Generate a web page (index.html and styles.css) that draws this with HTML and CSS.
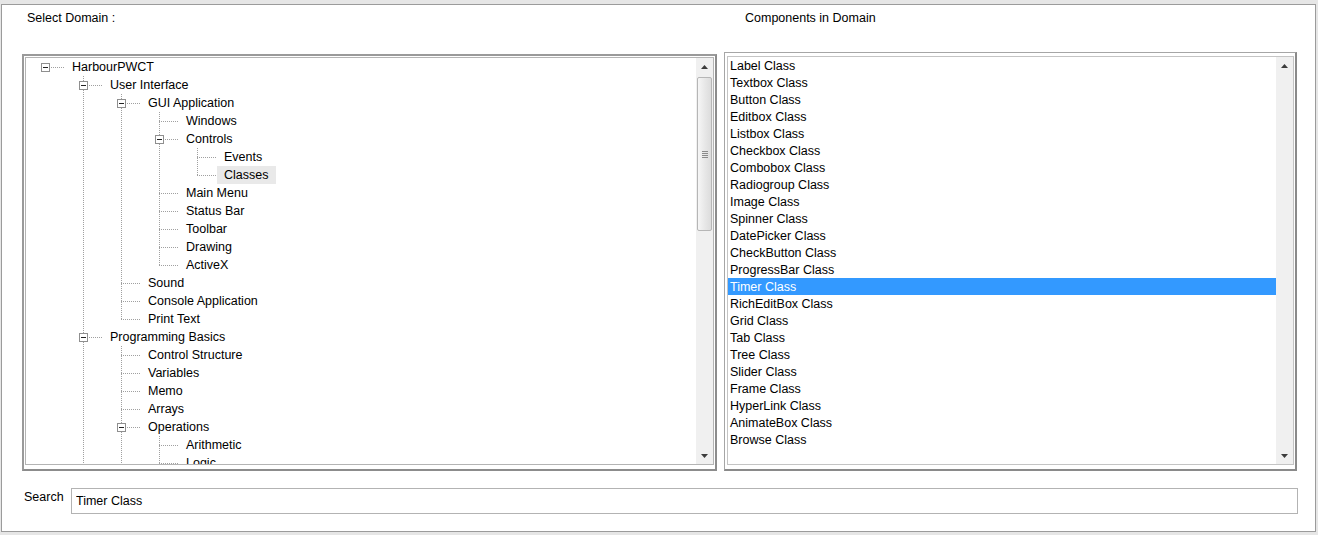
FILE: index.html
```html
<!DOCTYPE html>
<html>
<head>
<meta charset="utf-8">
<title>Components</title>
<link rel="stylesheet" href="styles.css">
</head>
<body>
<div class="window">
  <div class="inner">
    <div class="header">
      <div class="hlabel first">Select Domain :</div>
      <div class="hlabel">Components in Domain</div>
    </div>
    <div class="panels">
      <div class="tree-panel">
        <div class="tree-box">
          <div class="tree">
            <div class="row"><span class="cell conn root"><i class="box"></i></span><span class="label">HarbourPWCT</span></div>
            <div class="row"><span class="cell"></span><span class="cell conn mid"><i class="box"></i></span><span class="label">User Interface</span></div>
            <div class="row"><span class="cell"></span><span class="cell pipe"></span><span class="cell conn mid"><i class="box"></i></span><span class="label">GUI Application</span></div>
            <div class="row"><span class="cell"></span><span class="cell pipe"></span><span class="cell pipe"></span><span class="cell conn mid"></span><span class="label">Windows</span></div>
            <div class="row"><span class="cell"></span><span class="cell pipe"></span><span class="cell pipe"></span><span class="cell conn mid"><i class="box"></i></span><span class="label">Controls</span></div>
            <div class="row"><span class="cell"></span><span class="cell pipe"></span><span class="cell pipe"></span><span class="cell pipe"></span><span class="cell conn mid"></span><span class="label">Events</span></div>
            <div class="row"><span class="cell"></span><span class="cell pipe"></span><span class="cell pipe"></span><span class="cell pipe"></span><span class="cell conn last"></span><span class="label sel">Classes</span></div>
            <div class="row"><span class="cell"></span><span class="cell pipe"></span><span class="cell pipe"></span><span class="cell conn mid"></span><span class="label">Main Menu</span></div>
            <div class="row"><span class="cell"></span><span class="cell pipe"></span><span class="cell pipe"></span><span class="cell conn mid"></span><span class="label">Status Bar</span></div>
            <div class="row"><span class="cell"></span><span class="cell pipe"></span><span class="cell pipe"></span><span class="cell conn mid"></span><span class="label">Toolbar</span></div>
            <div class="row"><span class="cell"></span><span class="cell pipe"></span><span class="cell pipe"></span><span class="cell conn mid"></span><span class="label">Drawing</span></div>
            <div class="row"><span class="cell"></span><span class="cell pipe"></span><span class="cell pipe"></span><span class="cell conn last"></span><span class="label">ActiveX</span></div>
            <div class="row"><span class="cell"></span><span class="cell pipe"></span><span class="cell conn mid"></span><span class="label">Sound</span></div>
            <div class="row"><span class="cell"></span><span class="cell pipe"></span><span class="cell conn mid"></span><span class="label">Console Application</span></div>
            <div class="row"><span class="cell"></span><span class="cell pipe"></span><span class="cell conn last"></span><span class="label">Print Text</span></div>
            <div class="row"><span class="cell"></span><span class="cell conn mid"><i class="box"></i></span><span class="label">Programming Basics</span></div>
            <div class="row"><span class="cell"></span><span class="cell pipe"></span><span class="cell conn mid"></span><span class="label">Control Structure</span></div>
            <div class="row"><span class="cell"></span><span class="cell pipe"></span><span class="cell conn mid"></span><span class="label">Variables</span></div>
            <div class="row"><span class="cell"></span><span class="cell pipe"></span><span class="cell conn mid"></span><span class="label">Memo</span></div>
            <div class="row"><span class="cell"></span><span class="cell pipe"></span><span class="cell conn mid"></span><span class="label">Arrays</span></div>
            <div class="row"><span class="cell"></span><span class="cell pipe"></span><span class="cell conn mid"><i class="box"></i></span><span class="label">Operations</span></div>
            <div class="row"><span class="cell"></span><span class="cell pipe"></span><span class="cell pipe"></span><span class="cell conn mid"></span><span class="label">Arithmetic</span></div>
            <div class="row"><span class="cell"></span><span class="cell pipe"></span><span class="cell pipe"></span><span class="cell conn mid"></span><span class="label">Logic</span></div>
          </div>
          <div class="sb">
            <div class="sb-btn"><svg width="7" height="4" viewBox="0 0 7 4"><path d="M0 4 L3.5 0 L7 4 Z" fill="#3c3c3c"/></svg></div>
            <div class="sb-track">
              <div class="thumb"><span class="grip"></span><span class="grip"></span><span class="grip"></span><span class="grip"></span></div>
            </div>
            <div class="sb-btn"><svg width="7" height="4" viewBox="0 0 7 4"><path d="M0 0 L7 0 L3.5 4 Z" fill="#3c3c3c"/></svg></div>
          </div>
        </div>
      </div>
      <div class="list-panel">
        <div class="list-box">
          <div class="list">
            <div class="item">Label Class</div>
            <div class="item">Textbox Class</div>
            <div class="item">Button Class</div>
            <div class="item">Editbox Class</div>
            <div class="item">Listbox Class</div>
            <div class="item">Checkbox Class</div>
            <div class="item">Combobox Class</div>
            <div class="item">Radiogroup Class</div>
            <div class="item">Image Class</div>
            <div class="item">Spinner Class</div>
            <div class="item">DatePicker Class</div>
            <div class="item">CheckButton Class</div>
            <div class="item">ProgressBar Class</div>
            <div class="item sel">Timer Class</div>
            <div class="item">RichEditBox Class</div>
            <div class="item">Grid Class</div>
            <div class="item">Tab Class</div>
            <div class="item">Tree Class</div>
            <div class="item">Slider Class</div>
            <div class="item">Frame Class</div>
            <div class="item">HyperLink Class</div>
            <div class="item">AnimateBox Class</div>
            <div class="item">Browse Class</div>
          </div>
          <div class="sb">
            <div class="sb-btn"><svg width="7" height="4" viewBox="0 0 7 4"><path d="M0 4 L3.5 0 L7 4 Z" fill="#3c3c3c"/></svg></div>
            <div class="sb-track"></div>
            <div class="sb-btn"><svg width="7" height="4" viewBox="0 0 7 4"><path d="M0 0 L7 0 L3.5 4 Z" fill="#3c3c3c"/></svg></div>
          </div>
        </div>
      </div>
    </div>
    <div class="search">
      <div class="search-label">Search</div>
      <input class="search-input" type="text" value="Timer Class">
    </div>
  </div>
</div>
</body>
</html>
```
FILE: styles.css
```css
html, body {
  margin: 0;
  padding: 0;
  background: #ffffff;
}

body {
  font-family: "Liberation Sans", Arial, sans-serif;
  font-size: 12.5px;
  color: #000;
}

.window {
  width: 1318px;
  height: 535px;
  box-sizing: border-box;
  background: #e6e6e6;
  padding: 4px 2px 3px 1px;
}

.inner {
  height: 100%;
  box-sizing: border-box;
  border: 1px solid #9b9b9b;
  background: #ffffff;
}

.header {
  display: flex;
  height: 47px;
  box-sizing: border-box;
  padding: 6px 0 0 25px;
}

.hlabel {
  line-height: 15px;
}

.hlabel.first {
  width: 718px;
}

.panels {
  display: flex;
  align-items: flex-end;
  gap: 7px;
  margin-left: 20px;
}

/* ---------- tree ---------- */
.tree-panel {
  width: 695px;
  height: 417px;
  box-sizing: border-box;
  border: 2px solid #8c8c8c;
  border-top-color: #9a9a9a;
  border-left-color: #9a9a9a;
  padding: 1px 1px 4px 1px;
  display: flex;
}

.tree-box {
  flex: 1;
  display: flex;
  border: 1px solid #b4b4b4;
  background: #fff;
  overflow: hidden;
}

.tree {
  flex: 1;
  overflow: hidden;
}

.row {
  display: flex;
  height: 18px;
  line-height: 18px;
  white-space: nowrap;
}

.cell {
  position: relative;
  flex: none;
  width: 38px;
  height: 18px;
}

.pipe::before,
.conn.mid::before,
.conn.last::before {
  content: "";
  position: absolute;
  left: 19px;
  top: 0;
  width: 1px;
  height: 18px;
  background: repeating-linear-gradient(to bottom, #a0a0a0 0 1px, transparent 1px 2px);
}

.conn.last::before {
  height: 10px;
}

.conn::after {
  content: "";
  position: absolute;
  left: 19px;
  top: 9px;
  width: 19px;
  height: 1px;
  background: repeating-linear-gradient(to right, #a0a0a0 0 1px, transparent 1px 2px);
}

.box {
  position: absolute;
  z-index: 1;
  left: 15px;
  top: 5px;
  width: 9px;
  height: 9px;
  box-sizing: border-box;
  border: 1px solid #8f8f8f;
  background: #fff;
}

.box::after {
  content: "";
  position: absolute;
  left: 1px;
  top: 3px;
  width: 5px;
  height: 1px;
  background: #222;
}

.label {
  margin-left: 1px;
  padding: 0 8px 0 7px;
}

.label.sel {
  background: #e9e9e9;
}

/* ---------- scrollbars ---------- */
.sb {
  flex: none;
  width: 17px;
  display: flex;
  flex-direction: column;
  background: #f0f0f0;
}

.sb-btn {
  height: 17px;
  flex: none;
  display: flex;
  align-items: center;
  justify-content: center;
}

.sb-btn svg {
  display: block;
}

.sb-track {
  flex: 1;
  padding-top: 2px;
}

.thumb {
  margin-left: 1px;
  width: 15px;
  height: 154px;
  box-sizing: border-box;
  border: 1px solid #b6b6b6;
  border-radius: 2px;
  background: linear-gradient(to right, #f6f6f6, #e8e8e8 50%, #dcdcdc);
  display: flex;
  flex-direction: column;
  align-items: center;
  justify-content: center;
  gap: 1px;
}

.grip {
  width: 6px;
  height: 1px;
  background: #8a8a8a;
}

/* ---------- list ---------- */
.list-panel {
  width: 573px;
  height: 419px;
  box-sizing: border-box;
  border-style: solid;
  border-width: 1px 2px 2px 1px;
  border-color: #a6a6a6 #8a8a8a #8a8a8a #a6a6a6;
  padding: 3px 1px 4px 2px;
  display: flex;
}

.list-box {
  flex: 1;
  display: flex;
  border: 1px solid #c4c4c4;
  background: #fff;
  overflow: hidden;
}

.list {
  flex: 1;
  overflow: hidden;
}

.item {
  height: 17px;
  box-sizing: border-box;
  padding: 1px 0 0 2px;
  line-height: 16px;
  white-space: nowrap;
}

.item.sel {
  background: #3399ff;
  color: #fff;
}

/* ---------- search ---------- */
.search {
  display: flex;
  align-items: flex-start;
  margin-top: 17px;
  padding-left: 22px;
}

.search-label {
  width: 47px;
  margin-top: 2px;
  line-height: 15px;
}

.search-input {
  width: 1227px;
  height: 26px;
  box-sizing: border-box;
  margin: 0;
  border: 1px solid #b3b3b3;
  padding: 0 4px;
  font-family: "Liberation Sans", Arial, sans-serif;
  font-size: 12.5px;
  color: #000;
  background: #fff;
  outline: none;
}
```
